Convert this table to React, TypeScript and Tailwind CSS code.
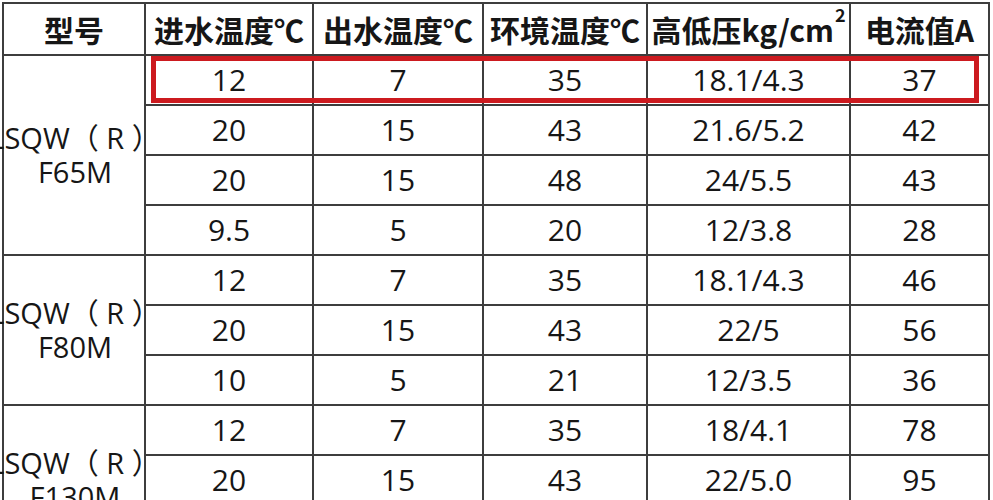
import React from 'react';

type Row = [string, string, string, string, string];

const groups: { model: string; rows: Row[] }[] = [
  {
    model: 'F65M',
    rows: [
      ['12', '7', '35', '18.1/4.3', '37'],
      ['20', '15', '43', '21.6/5.2', '42'],
      ['20', '15', '48', '24/5.5', '43'],
      ['9.5', '5', '20', '12/3.8', '28'],
    ],
  },
  {
    model: 'F80M',
    rows: [
      ['12', '7', '35', '18.1/4.3', '46'],
      ['20', '15', '43', '22/5', '56'],
      ['10', '5', '21', '12/3.5', '36'],
    ],
  },
  {
    model: 'F130M',
    rows: [
      ['12', '7', '35', '18/4.1', '78'],
      ['20', '15', '43', '22/5.0', '95'],
      ['10', '5', '21', '12/3.6', '70'],
    ],
  },
];

const headers = ['进水温度℃', '出水温度℃', '环境温度℃'];

const cell = 'border-2 border-[#3d3d3d] p-0 text-center align-middle';

export default function App() {
  return (
    <div className="relative w-[993px] h-[500px] overflow-hidden bg-white text-[#161616]">
      <table className="table-fixed border-collapse w-[986px] ml-[2px] mt-[2px]">
        <colgroup>
          <col className="w-[142px]" />
          <col className="w-[168px]" />
          <col className="w-[170px]" />
          <col className="w-[164px]" />
          <col className="w-[203px]" />
          <col className="w-[139px]" />
        </colgroup>
        <thead>
          <tr className="h-[52px] font-['Noto_Sans_CJK_SC',sans-serif] font-bold text-[30px] leading-none">
            <th className={cell}>型号</th>
            {headers.map((h) => (
              <th key={h} className={`${cell} whitespace-nowrap`}>
                {h}
              </th>
            ))}
            <th className={`${cell} whitespace-nowrap`}>
              高低压kg/cm<sup className="text-[18px] align-[11px] ml-[1px]">2</sup>
            </th>
            <th className={`${cell} whitespace-nowrap`}>电流值A</th>
          </tr>
        </thead>
        <tbody className="font-['Open_Sans','Noto_Sans_CJK_SC',sans-serif] text-[30px] leading-none">
          {groups.map((g) =>
            g.rows.map((r, i) => (
              <tr key={g.model + i} className="h-[50px]">
                {i === 0 && (
                  <td rowSpan={g.rows.length} className={cell}>
                    <div className="flex flex-col items-center pl-[2px] text-[29px] leading-[34px] whitespace-nowrap">
                      <span>LSQW（ R ）</span>
                      <span>{g.model}</span>
                    </div>
                  </td>
                )}
                {r.map((v, j) => (
                  <td key={j} className={cell}>
                    {v}
                  </td>
                ))}
              </tr>
            ))
          )}
        </tbody>
      </table>

      {/* highlight box on first data row */}
      <div className="absolute left-[151px] top-[56px] w-[828px] h-[47px] border-[5px] border-[#cc1a1f]" />
    </div>
  );
}
